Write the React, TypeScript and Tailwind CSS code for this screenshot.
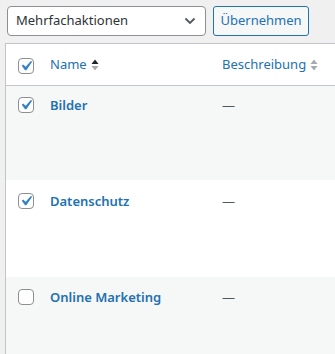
import React from "react";

const rows = [
  { name: "Bilder", checked: true, h: "h-[94px]", pt: "pt-[11px]", bg: "bg-[#f6f7f7]" },
  { name: "Datenschutz", checked: true, h: "h-[97px]", pt: "pt-[13px]", bg: "bg-white" },
  { name: "Online Marketing", checked: false, h: "h-[97px]", pt: "pt-[12px]", bg: "bg-[#f6f7f7]" },
];

function Checkbox({ checked }: { checked: boolean }) {
  return (
    <span className="flex h-[16px] w-[16px] items-center justify-center overflow-visible rounded-[4px] border border-[#8c8f94] bg-white">
      {checked && (
        <svg width="20" height="20" viewBox="0 0 20 20" className="shrink-0">
          <path d="M14.83 4.89l1.34.94-5.81 8.38H9.02L5.78 9.67l1.34-1.25 2.57 2.4z" fill="#3582c4" />
        </svg>
      )}
    </span>
  );
}

function SortArrows({ active }: { active?: boolean }) {
  return (
    <svg width="8" height="12" viewBox="0 0 8 12" className="ml-[4px]">
      <path d="M4 0.5L7.5 5H0.5z" fill={active ? "#1d2327" : "#a7aaad"} />
      <path d="M4 11.5L7.5 7H0.5z" fill="#a7aaad" />
    </svg>
  );
}

export default function App() {
  return (
    <div
      className="h-[354px] w-[335px] overflow-hidden bg-[#f0f0f1] text-[#2c3338]"
      style={{ fontFamily: '"Noto Sans", "Open Sans", sans-serif' }}
    >
      <div className="flex items-center gap-[7px] pl-[7px] pt-[6px]">
        <div className="flex h-[30px] w-[199px] items-center justify-between rounded-[4px] border border-[#8c8f94] bg-white pl-[8px] pr-[9px] text-[13px] text-[#2c3338]">
          <span>Mehrfachaktionen</span>
          <svg width="12" height="8" viewBox="0 0 12 8">
            <path d="M1.5 1.5L6 6l4.5-4.5" fill="none" stroke="#50575e" strokeWidth="1.8" />
          </svg>
        </div>
        <button className="flex h-[30px] w-[96px] items-center justify-center rounded-[3px] border border-[#2271b1] bg-[#f6f7f7] text-[13px] text-[#2271b1]">
          Übernehmen
        </button>
      </div>

      <div className="ml-[5px] mt-[7px] border-l border-t border-[#c3c4c7] bg-white">
        <div className="flex h-[42px] items-center border-b border-[#c3c4c7] text-[13px] text-[#2271b1]">
          <div className="w-[44px] pl-[12px] pt-[2px]">
            <Checkbox checked />
          </div>
          <div className="flex w-[172px] items-center">
            <span>Name</span>
            <SortArrows active />
          </div>
          <div className="flex items-center">
            <span>Beschreibung</span>
            <SortArrows />
          </div>
        </div>

        {rows.map((row) => (
          <div key={row.name} className={`flex items-start ${row.h} ${row.pt} ${row.bg}`}>
            <div className="w-[44px] pl-[12px]">
              <Checkbox checked={row.checked} />
            </div>
            <div className="w-[172px] text-[13px] font-semibold leading-[16px] text-[#2271b1]">
              {row.name}
            </div>
            <div className="text-[13px] leading-[16px] text-[#50575e]">—</div>
          </div>
        ))}
      </div>
    </div>
  );
}
